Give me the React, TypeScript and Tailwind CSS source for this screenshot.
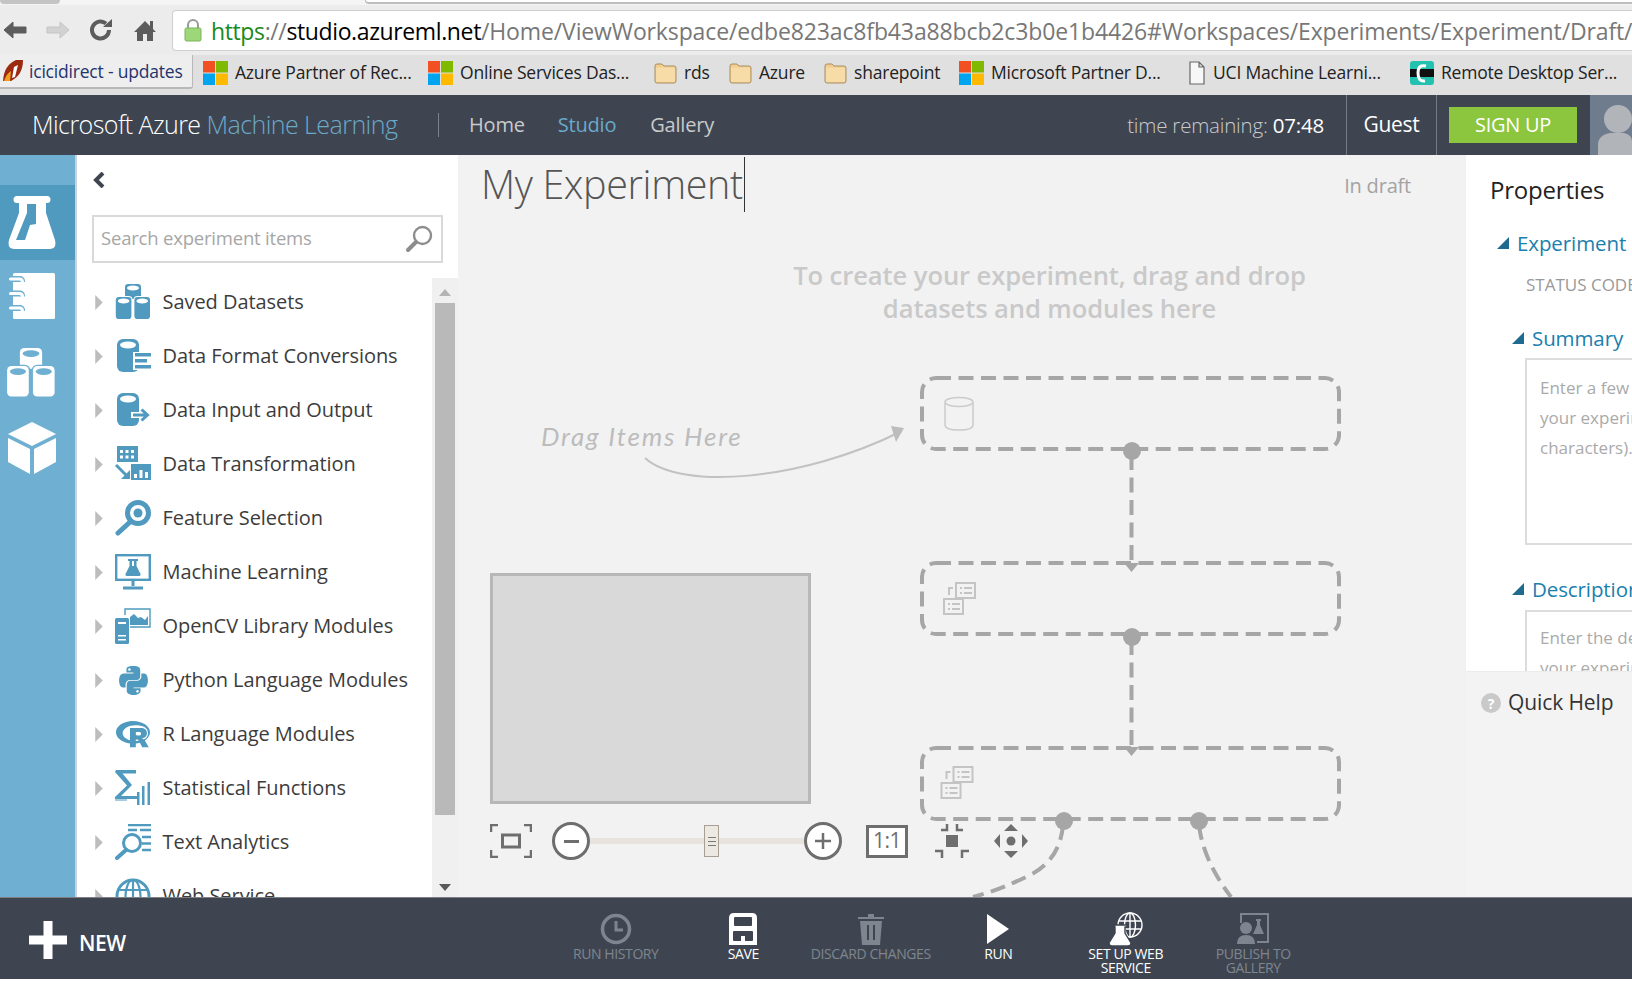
import React from "react";
import { FaPython, FaRProject } from "react-icons/fa";

const C = "#4f9abe";

function Cyl({ cx, top, rx, h, fill, gap }: { cx: number; top: number; rx: number; h: number; fill: string; gap: string }) {
  return (
    <g>
      <rect x={cx - rx} y={top} width={rx * 2} height={h} rx={rx * 0.4} fill={fill} />
      <ellipse cx={cx} cy={top + 4} rx={rx - 2} ry={2.4} fill={gap} />
    </g>
  );
}

function DatasetsSvg({ fill, gap, className }: { fill: string; gap: string; className: string }) {
  return (
    <svg viewBox="0 0 36 36" className={className}>
      <Cyl cx={18} top={0} rx={8} h={15} fill={fill} gap={gap} />
      <rect x={0.5} y={12} width={17} height={24} rx={4} fill={gap} />
      <rect x={18.5} y={12} width={17} height={24} rx={4} fill={gap} />
      <Cyl cx={8.6} top={13} rx={7.8} h={22} fill={fill} gap={gap} />
      <Cyl cx={27.2} top={13} rx={7.8} h={22} fill={fill} gap={gap} />
    </svg>
  );
}

function FormatIcon() {
  return (
    <svg viewBox="0 0 36 36" className="h-[36px] w-[36px]">
      <rect x={2} y={1} width={22} height={33} rx={6} fill={C} />
      <ellipse cx={13} cy={7} rx={8} ry={3.4} fill="#fff" />
      <rect x={18} y={14} width={18} height={18} fill="#fff" />
      <path d="M20 15h16v3.500H20zM20 21h12v3.500H20zM20 27h16v3.500H20z" fill={C} />
    </svg>
  );
}
function InputIcon() {
  return (
    <svg viewBox="0 0 36 36" className="h-[36px] w-[36px]">
      <rect x={2} y={1} width={22} height={33} rx={6} fill={C} />
      <ellipse cx={13} cy={7} rx={8} ry={3.4} fill="#fff" />
      <path d="M16 20h11v-6l9 9-9 9v-6H16z" fill="#fff" />
      <path d="M18 23h14M26.500 17.500l6 5.500-6 5.500" fill="none" stroke={C} strokeWidth={3} />
    </svg>
  );
}
function TransformIcon() {
  return (
    <svg viewBox="0 0 36 36" className="h-[36px] w-[36px]">
      <rect x={2} y={0} width={21} height={16} fill={C} />
      <path d="M5 4h3v3H5zM10.500 4h3v3h-3zM16 4h3v3h-3zM5 9.500h3v3H5zM10.500 9.500h3v3h-3zM16 9.500h3v3h-3z" fill="#fff" />
      <path d="M1 19l11 11" stroke={C} strokeWidth={3} />
      <path d="M6 33h9v-9z" fill={C} />
      <rect x={16} y={18} width={20} height={16} fill={C} />
      <path d="M19 28h3v4h-3zM24.500 24h3v8h-3zM30 26h3v6h-3z" fill="#fff" />
    </svg>
  );
}
function FeatureIcon() {
  return (
    <svg viewBox="0 0 36 36" className="h-[36px] w-[36px]">
      <circle cx={23} cy={13} r={10.500} fill="none" stroke={C} strokeWidth={5} />
      <circle cx={23} cy={13} r={4.500} fill={C} />
      <path d="M15 22L3 33" stroke={C} strokeWidth={5} strokeLinecap="round" />
    </svg>
  );
}
function MlIcon() {
  return (
    <svg viewBox="0 0 36 36" className="h-[36px] w-[36px]">
      <rect x={1.200} y={1.200} width={33.600} height={24.600} fill="none" stroke={C} strokeWidth={2.400} />
      <path d="M13 5h10v2h-1.500v5l4 8q.5 2-2 2H12.500q-2.500 0-2-2l4-8V7H13z" fill={C} />
      <path d="M17 7h2v5h-2z" fill="#fff" />
      <path d="M18 26v6M8 34h20" stroke={C} strokeWidth={3} />
    </svg>
  );
}
function OpenCvIcon() {
  return (
    <svg viewBox="0 0 36 36" className="h-[36px] w-[36px]">
      <path d="M10 7V1h25v18H15" fill="none" stroke={C} strokeWidth={1.400} />
      <path d="M15 17V9l4-3 4 4 3-1 4 3 3-4v9z" fill={C} />
      <rect x={0} y={10} width={14} height={26} rx={1.500} fill={C} />
      <path d="M3 14h8v2H3zM3 27h8v1.500H3zM3 31h8v1.500H3z" fill="#fff" />
    </svg>
  );
}
function SigmaIcon() {
  return (
    <svg viewBox="0 0 36 36" className="h-[36px] w-[36px]">
      <path d="M1 0h20v3.500H7.500L17 15 6 26h16v3H0v-2l12-11.500L0 2z" fill={C} />
      <path d="M22 22h2.500v13H22zM27 16h2.500v19H27zM32.500 12h2.500v23h-2.500z" fill={C} />
      <path d="M0 30h12" stroke={C} strokeWidth={1} />
    </svg>
  );
}
function TextIcon() {
  return (
    <svg viewBox="0 0 36 36" className="h-[36px] w-[36px]">
      <path d="M13 1h23M13 6h9M25 6h11M27 13h9M27 19.500h9M27 26h9" stroke={C} strokeWidth={2.400} />
      <circle cx={17} cy={19} r={8.500} fill="none" stroke={C} strokeWidth={3} />
      <path d="M11 26L2 34" stroke={C} strokeWidth={4} strokeLinecap="round" />
    </svg>
  );
}
function GlobeIcon() {
  return (
    <svg viewBox="0 0 36 36" className="h-[36px] w-[36px]" fill="none" stroke={C} strokeWidth={2.200}>
      <circle cx={18} cy={18} r={16} strokeWidth={3} />
      <ellipse cx={18} cy={18} rx={7.500} ry={16} />
      <path d="M18 2v32M3 12h30M3 24h30" />
    </svg>
  );
}

const modules: { name: string; icon: React.ReactNode }[] = [
  { name: "Saved Datasets", icon: <DatasetsSvg fill={C} gap="#fff" className="h-[36px] w-[36px]" /> },
  { name: "Data Format Conversions", icon: <FormatIcon /> },
  { name: "Data Input and Output", icon: <InputIcon /> },
  { name: "Data Transformation", icon: <TransformIcon /> },
  { name: "Feature Selection", icon: <FeatureIcon /> },
  { name: "Machine Learning", icon: <MlIcon /> },
  { name: "OpenCV Library Modules", icon: <OpenCvIcon /> },
  { name: "Python Language Modules", icon: <FaPython className="h-[33px] w-[33px] text-[#4f9abe]" /> },
  { name: "R Language Modules", icon: <FaRProject className="h-[30px] w-[36px] text-[#4f9abe]" /> },
  { name: "Statistical Functions", icon: <SigmaIcon /> },
  { name: "Text Analytics", icon: <TextIcon /> },
  { name: "Web Service", icon: <GlobeIcon /> },
];

function MsLogo() {
  return (
    <svg viewBox="0 0 25 24" className="h-[24px] w-[25px] shrink-0">
      <rect width={12} height={11.500} fill="#f25022" />
      <rect x={13} width={12} height={11.500} fill="#7fba00" />
      <rect y={12.500} width={12} height={11.500} fill="#00a4ef" />
      <rect x={13} y={12.500} width={12} height={11.500} fill="#ffb900" />
    </svg>
  );
}
function Folder() {
  return (
    <svg viewBox="0 0 23 24" className="h-[24px] w-[23px] shrink-0">
      <path d="M1 5q0-2 2-2h5l2 2h10q2 0 2 2v13q0 2-2 2H3q-2 0-2-2z" fill="#f3cd8e" stroke="#a98f63" strokeWidth={1} />
      <rect x={2} y={6.500} width={19} height={14.500} rx={1} fill="#f8dca8" />
    </svg>
  );
}
function FileIcon() {
  return (
    <svg viewBox="0 0 18 24" className="h-[24px] w-[18px] shrink-0" fill="none" stroke="#666" strokeWidth={1.200}>
      <path d="M2 1h9l5 5v17H2zM11 1v5h5" fill="#f7f7f7" />
    </svg>
  );
}
function RemoteIcon() {
  return (
    <svg viewBox="0 0 24 24" className="h-[24px] w-[24px] shrink-0">
      <rect width={24} height={24} rx={3} fill="#22c1b0" />
      <rect y={8} width={24} height={8} fill="#111" />
      <path d="M16 5q-8-2-8 7t7 8" fill="none" stroke="#fff" strokeWidth={3} />
    </svg>
  );
}

const bookmarks: { label: string; icon: React.ReactNode; cls: string }[] = [
  { label: "Azure Partner of Rec...", icon: <MsLogo />, cls: "w-[225px]" },
  { label: "Online Services Das...", icon: <MsLogo />, cls: "w-[226px]" },
  { label: "rds", icon: <Folder />, cls: "w-[75px]" },
  { label: "Azure", icon: <Folder />, cls: "w-[95px]" },
  { label: "sharepoint", icon: <Folder />, cls: "w-[135px]" },
  { label: "Microsoft Partner D...", icon: <MsLogo />, cls: "w-[229px]" },
  { label: "UCI Machine Learni...", icon: <FileIcon />, cls: "w-[222px]" },
  { label: "Remote Desktop Ser...", icon: <RemoteIcon />, cls: "w-[222px]" },
];

function BrowserChrome() {
  return (
    <div className="flex h-[95px] shrink-0 flex-col bg-[#ececec] font-['Open_Sans',sans-serif]">
      <div className="flex h-[5px] shrink-0 bg-[#f4f4f4]">
        <div className="h-[4px] w-[60px] rounded-b-[4px] bg-[#c4c4c4]" />
        <div className="ml-[305px] h-[4px] flex-1 rounded-bl-[4px] border-b-2 border-l border-[#bdbdbd] bg-white" />
      </div>
      <div className="flex h-[50px] shrink-0 items-center">
        <div className="flex w-[172px] shrink-0 items-center pl-[2px]">
          <svg viewBox="0 0 26 24" className="h-[24px] w-[26px]">
            <path d="M2 12l9-8v5h13v6H11v5z" fill="#5c5c5c" stroke="#5c5c5c" strokeLinejoin="round" />
          </svg>
          <svg viewBox="0 0 26 24" className="ml-[17px] h-[24px] w-[26px]">
            <path d="M24 12l-9-8v5H2v6h13v5z" fill="#d2d2d2" stroke="#c4c4c4" strokeLinejoin="round" />
          </svg>
          <svg viewBox="0 0 24 24" className="ml-[18px] h-[24px] w-[24px]" fill="none" stroke="#5c5c5c" strokeWidth={4}>
            <path d="M20 12a8.500 8.500 0 1 1-3-6.500" />
            <path d="M14 9h9V1z" fill="#5c5c5c" stroke="none" />
          </svg>
          <svg viewBox="0 0 22 24" className="ml-[21px] h-[24px] w-[22px]">
            <path d="M11 3L0 14h3v9h6v-7h4v7h6v-9h3l-3-3V3h-3v5z" fill="#5c5c5c" />
          </svg>
        </div>
        <div className="flex h-[41px] flex-1 items-center overflow-hidden rounded-l-[4px] border border-r-0 border-[#cfcfcf] bg-white pl-[11px]">
          <svg viewBox="0 0 18 24" className="h-[24px] w-[18px] shrink-0">
            <path d="M4 11V7a5 5 0 0 1 10 0v4" fill="none" stroke="#9a9a9a" strokeWidth={2} />
            <rect x={1} y={10} width={16} height={13} rx={1.500} fill="#9ed67a" stroke="#7bb25b" />
          </svg>
          <span className="ml-[9px] mt-[2px] whitespace-nowrap text-[23px] tracking-[-0.13px] text-[#777]">
            <span className="tracking-[-0.38px]">
              <span className="text-[#1a8a1a]">https</span>://
              <span className="text-black">studio.azureml.net</span>
            </span>
            /Home/ViewWorkspace/edbe823ac8fb43a88bcb2c3b0e1b4426#Workspaces/Experiments/Experiment/Draft/
          </span>
        </div>
      </div>
      <div className="flex h-[40px] shrink-0 items-start overflow-hidden whitespace-nowrap bg-[#e0e0e0] text-[17.500px] tracking-[-0.2px] text-[#222]">
        <div className="flex h-[34px] w-[193px] shrink-0 items-center rounded-br-[3px] border-b-2 border-r border-[#b8b8b8] bg-[#eeeeee] pl-[2px] text-[#24346e]">
          <svg viewBox="0 0 22 24" className="h-[24px] w-[22px] shrink-0">
            <path d="M1 22Q2 6 14 1h7Q21 16 9 22z" fill="#9c2a10" />
            <path d="M2 22Q5 14 9 12l-1 10z" fill="#f0a020" />
            <path d="M12 8l4-2-3 12-3 1z" fill="#fff" />
          </svg>
          <span className="ml-[5px]">icicidirect - updates</span>
        </div>
        <div className="flex h-[40px] items-center pb-[5px] pl-[10px]">
          {bookmarks.map((b) => (
            <div key={b.label} className={`flex shrink-0 items-center gap-[7px] ${b.cls}`}>
              {b.icon}
              <span>{b.label}</span>
            </div>
          ))}
        </div>
      </div>
    </div>
  );
}

function TopNav() {
  return (
    <div className="flex h-[60px] shrink-0 items-center bg-[#3e4551] font-['Open_Sans',sans-serif]">
      <div className="w-[438px] shrink-0 whitespace-nowrap pl-[32px] text-[25px] font-light tracking-[-0.56px] text-white">
        Microsoft Azure <span className="text-[#6ba9c9]">Machine Learning</span>
      </div>
      <div className="h-[24px] w-px bg-[#7d838c]" />
      <div className="ml-[30px] flex items-center gap-[33px] text-[20px] tracking-[-0.2px] text-[#c8cacc]">
        <span>Home</span>
        <span className="text-[#6ba9c9]">Studio</span>
        <span className="ml-[1px]">Gallery</span>
      </div>
      <div className="ml-auto flex h-full items-center">
        <div className="mr-[22px] whitespace-nowrap text-[20.500px] font-light tracking-[-0.2px] text-[#c8cacc]">
          time remaining: <span className="font-medium text-white">07:48</span>
        </div>
        <div className="flex h-full w-[91px] items-center justify-center border-x border-[#757b85] text-[21px] tracking-[-0.3px] text-white">
          Guest
        </div>
        <div className="ml-[12px] flex h-[36px] w-[128px] items-center justify-center bg-[#8cc63f] text-[20px] tracking-[-0.3px] text-white">
          SIGN UP
        </div>
        <div className="relative ml-[13px] h-full w-[42px] overflow-hidden bg-[#6f7c8d]">
          <svg viewBox="0 0 42 60" className="h-[60px] w-[42px]">
            <circle cx={28} cy={24} r={14} fill="#b1b5ba" />
            <path d="M8 60V50q0-10 12-12h14q8 2 8 8v14z" fill="#b1b5ba" />
          </svg>
        </div>
      </div>
    </div>
  );
}

function SideRail() {
  return (
    <div className="flex w-[77px] shrink-0 flex-col border-r-2 border-[#c9d3d9] bg-[#6fb0d2]">
      <div className="mt-[30px] flex h-[75px] items-center bg-[#4f9abe] pl-[8px]">
        <svg viewBox="0 0 48 53" className="h-[53px] w-[48px]">
          <path d="M9 0h30a3.500 3.500 0 0 1 0 7h-1v10l9 27q2 9-5 9H6q-7 0-5-9l10-27V7H9a3.500 3.500 0 0 1 0-7z" fill="#fff" />
          <path d="M19 8h9v20l-6 1-5 15H8l11-27z" fill="#4f9abe" />
        </svg>
      </div>
      <div className="mt-[13px] flex h-[46px] pl-[9px]">
        <svg viewBox="0 0 46 46" className="h-[46px] w-[46px]">
          <rect x={4} y={0} width={42} height={46} rx={1.500} fill="#fff" />
          <path d="M0 3h11a5 5 0 0 1 5 5v1H0zM0 17.500h11a5 5 0 0 1 5 5v1H0zM0 32h11a5 5 0 0 1 5 5v1H0z" fill="#6fb0d2" />
          <path d="M1.500 6h9q3 0 3 3M1.500 20.500h9q3 0 3 3M1.500 35h9q3 0 3 3" fill="none" stroke="#fff" strokeWidth={3} strokeLinecap="round" />
        </svg>
      </div>
      <div className="mt-[27px] flex h-[54px] pl-[6px]">
        <DatasetsSvg fill="#fff" gap="#6fb0d2" className="h-[54px] w-[50px]" />
      </div>
      <div className="mt-[22px] flex h-[52px] pl-[8px]">
        <svg viewBox="0 0 48 52" className="h-[52px] w-[48px]">
          <path d="M24 0l24 12-24 12L0 12z" fill="#fff" />
          <path d="M0 16l22 11v25L0 40zM48 16L26 27v25l22-12z" fill="#fff" />
        </svg>
      </div>
    </div>
  );
}

function Palette() {
  return (
    <div className="flex w-[381px] shrink-0 flex-col bg-white font-['Open_Sans',sans-serif]">
      <div className="flex h-[60px] shrink-0 items-center pb-[10px] pl-[16px]">
        <svg viewBox="0 0 12 16" className="h-[16px] w-[12px]">
          <path d="M10 1L3 8l7 7" fill="none" stroke="#3e4551" strokeWidth={4} />
        </svg>
      </div>
      <div className="ml-[15px] flex h-[48px] w-[351px] shrink-0 items-center justify-between border-2 border-[#d9d9d9] pl-[7px] pr-[8px] text-[18.500px] text-[#a6a6a6]">
        <span className="mb-[2px] tracking-[-0.2px]">Search experiment items</span>
        <svg viewBox="0 0 28 28" className="h-[28px] w-[28px]" fill="none" stroke="#8d8d8d">
          <circle cx={17.500} cy={10.500} r={8.500} strokeWidth={2.400} />
          <path d="M11 17L3 25" strokeWidth={4} strokeLinecap="round" />
        </svg>
      </div>
      <div className="mt-[15px] flex min-h-0 flex-1">
        <div className="-mt-[3px] min-w-0 flex-1 overflow-hidden">
          {modules.map((m) => (
            <div key={m.name} className="flex h-[54px] shrink-0 items-center whitespace-nowrap">
              <svg viewBox="0 0 8 16" className="ml-[18px] h-[15px] w-[8px] shrink-0">
                <path d="M0 0l8 8-8 8z" fill="#bdbdbd" />
              </svg>
              <div className="ml-[11px] flex h-[36px] w-[38px] shrink-0 items-center justify-center">{m.icon}</div>
              <span className="ml-[10.500px] text-[20px] tracking-[-0.05px] text-[#3c3c3c]">{m.name}</span>
            </div>
          ))}
        </div>
        <div className="flex w-[26px] shrink-0 flex-col items-center bg-[#f0f0f0]">
          <svg viewBox="0 0 12 7" className="mt-[11px] h-[7px] w-[12px]">
            <path d="M0 7l6-7 6 7z" fill="#b4b4b4" />
          </svg>
          <div className="mt-[7px] h-[512px] w-[20px] bg-[#b9b9b9]" />
          <svg viewBox="0 0 12 7" className="mt-[69px] h-[7px] w-[12px]">
            <path d="M0 0l6 7 6-7z" fill="#5a5a5a" />
          </svg>
        </div>
      </div>
    </div>
  );
}

function DiagramArt() {
  const dash = { fill: "none", stroke: "#a6a6a6", strokeWidth: 4, strokeDasharray: "15 7.500" };
  return (
    <svg viewBox="458 155 1007 742" className="absolute inset-0 h-[742px] w-[1007px]">
      <rect x={922} y={378} width={417} height={71} rx={14} {...dash} />
      <rect x={922} y={563} width={417} height={71} rx={14} {...dash} />
      <rect x={922} y={748} width={417} height={71} rx={14} {...dash} />
      <circle cx={1132} cy={451} r={9} fill="#a6a6a6" />
      <circle cx={1132} cy={637} r={9} fill="#a6a6a6" />
      <circle cx={1064} cy={821} r={9} fill="#a6a6a6" />
      <circle cx={1199} cy={821} r={9} fill="#a6a6a6" />
      <path d="M1131.500 455V562" {...dash} />
      <path d="M1131.500 640V748" {...dash} />
      <path d="M1124 563h15l-7.500 9zM1124 747h15l-7.500 9z" fill="#a6a6a6" />
      <path d="M1063 825Q1060 860 1030 875T973 897" {...dash} />
      <path d="M1199 825Q1203 860 1231 897" {...dash} />
      <path d="M645 458C680 490 800 482 902 431" fill="none" stroke="#c2c2c2" strokeWidth={2} />
      <path d="M891 426L904 428 896 442z" fill="#bdbdbd" />
      <g fill="none" stroke="#cbcbcb" strokeWidth={1.500}>
        <path d="M945 403v22q0 5 14 5t14-5v-22" />
        <ellipse cx={959} cy={402} rx={14} ry={4.500} />
      </g>
      <g fill="none" stroke="#c4c4c4" strokeWidth={2}>
        <rect x={956} y={583} width={19} height={15} />
        <rect x={944} y={599} width={19} height={15} />
        <path d="M960 588h2M964 588h8M960 593h2M964 593h8M948 604h2M952 604h8M948 609h2M952 609h8" />
        <path d="M953 588h-4v7" />
        <rect x={953.500} y={767} width={19} height={15} />
        <rect x={941.500} y={783} width={19} height={15} />
        <path d="M957.500 772h2M961.500 772h8M957.500 777h2M961.500 777h8M945.500 788h2M949.500 788h8M945.500 793h2M949.500 793h8" />
        <path d="M950.500 772h-4v7" />
      </g>
    </svg>
  );
}

function ZoomControls() {
  return (
    <div className="absolute left-[32px] top-[667px] flex h-[38px] items-center">
      <svg viewBox="0 0 42 34" className="h-[34px] w-[42px]" fill="none" stroke="#6e6e6e" strokeWidth={2.500}>
        <path d="M1 8V1h7M34 1h7v7M41 26v7h-7M8 33H1v-7" />
        <rect x={12.500} y={11} width={17} height={12} strokeWidth={3} />
      </svg>
      <div className="ml-[20px] flex h-[38px] w-[38px] items-center justify-center rounded-full border-[3px] border-[#6e6e6e] bg-white">
        <div className="h-[3px] w-[15px] bg-[#6e6e6e]" />
      </div>
      <div className="relative flex h-[6px] w-[214px] items-center bg-[#e8e3dc]">
        <div className="absolute left-[114px] top-[-13px] flex h-[32px] w-[15px] flex-col items-center justify-center gap-[3px] border border-[#a89f94] bg-[#ece8e2]">
          <div className="h-px w-[8px] bg-[#7a7a7a]" />
          <div className="h-px w-[8px] bg-[#7a7a7a]" />
          <div className="h-px w-[8px] bg-[#7a7a7a]" />
        </div>
      </div>
      <div className="flex h-[38px] w-[38px] items-center justify-center rounded-full border-[3px] border-[#6e6e6e] bg-white">
        <svg viewBox="0 0 16 16" className="h-[16px] w-[16px]">
          <path d="M8 0v16M0 8h16" stroke="#6e6e6e" strokeWidth={2.500} />
        </svg>
      </div>
      <div className="ml-[24px] flex h-[33px] w-[42px] items-center justify-center border-[3px] border-[#6e6e6e] bg-white font-['Open_Sans',sans-serif] text-[21px] font-medium tracking-[-0.5px] text-[#6e6e6e]">
        1:1
      </div>
      <svg viewBox="0 0 34 34" className="ml-[27px] h-[34px] w-[34px]" fill="none" stroke="#6e6e6e" strokeWidth={2.500}>
        <path d="M12 0v6H6M22 0v6h6M0 27h7v7M34 27h-7v7" />
        <rect x={11} y={11} width={12} height={12} fill="#6e6e6e" stroke="none" />
      </svg>
      <svg viewBox="0 0 34 34" className="ml-[25px] h-[34px] w-[34px]" fill="#6e6e6e">
        <path d="M17 0l7 7H10zM17 34l-7-7h14zM0 17l6-7v14zM34 17l-6-7v14z" />
        <circle cx={17} cy={17} r={4.500} />
      </svg>
    </div>
  );
}

function Canvas() {
  return (
    <div className="relative flex min-w-0 flex-1 flex-col bg-[#f2f2f2] font-['Open_Sans',sans-serif]">
      <DiagramArt />
      <div className="relative flex h-[58px] shrink-0 items-center pl-[23px] pr-[54px]">
        <span className="border-r border-[#333] pr-px text-[39.500px] font-light leading-[55px] tracking-[-0.37px] text-[#555]">
          My Experiment
        </span>
        <span className="ml-auto mt-[3px] text-[20px] tracking-[-0.2px] text-[#a3a3a3]">In draft</span>
      </div>
      <div className="relative mt-[46px] pl-[176px] text-center text-[25.600px] font-semibold leading-[33px] tracking-[-0.1px] text-[#c9c9c9]">
        To create your experiment, drag and drop
        <br />
        datasets and modules here
      </div>
      <div className="absolute left-[83px] top-[262px] whitespace-nowrap font-['Lato',sans-serif] text-[26px] italic tracking-[1.8px] text-[#bcbcbc]">
        Drag Items Here
      </div>
      <div className="absolute left-[32px] top-[418px] h-[231px] w-[321px] border-[3px] border-[#b7b7b7] bg-[#d9d9d9]" />
      <ZoomControls />
    </div>
  );
}

function Triangle() {
  return (
    <svg viewBox="0 0 12 12" className="h-[12px] w-[12px] shrink-0">
      <path d="M12 0v12H0z" fill="#1f6a8f" />
    </svg>
  );
}

function PropertiesPanel() {
  return (
    <div className="flex w-[167px] shrink-0 flex-col overflow-hidden whitespace-nowrap border-l border-[#f0f0f0] bg-white font-['Open_Sans',sans-serif]">
      <div className="h-[516px] shrink-0 overflow-hidden">
        <div className="pl-[24px] pt-[16px] text-[24px] font-normal leading-[38px] tracking-[-0.2px] text-[#222]">Properties</div>
        <div className="mt-[19px] flex h-[30px] items-center gap-[8px] pl-[31px] text-[20.500px] font-medium tracking-[-0.1px] text-[#1a80ae]">
          <Triangle />
          Experiment
        </div>
        <div className="mt-[15px] pl-[60px] text-[17px] leading-[24px] text-[#999]">STATUS CODE</div>
        <div className="mt-[26px] flex h-[30px] items-center gap-[8px] pl-[46px] text-[20.500px] font-medium tracking-[-0.1px] text-[#1a80ae]">
          <Triangle />
          Summary
        </div>
        <div className="ml-[59px] mt-[5px] h-[187px] w-[200px] border-2 border-[#dcdcdc] pl-[13px] pt-[13px] text-[17px] leading-[30px] text-[#aaa]">
          Enter a few words
          <br />
          your experiment
          <br />
          characters).
        </div>
        <div className="mt-[29px] flex h-[30px] items-center gap-[8px] pl-[46px] text-[20.500px] font-medium tracking-[-0.1px] text-[#1a80ae]">
          <Triangle />
          Description
        </div>
        <div className="ml-[59px] mt-[6px] h-[187px] w-[200px] border-2 border-[#dcdcdc] pl-[13px] pt-[11px] text-[17px] leading-[30px] text-[#aaa]">
          Enter the details
          <br />
          your experiment
        </div>
      </div>
      <div className="flex-1 border-t border-[#ececec] bg-[#f3f3f3] pl-[15px] pt-[16px]">
        <div className="flex h-[30px] items-center gap-[7px] text-[21px] tracking-[-0.1px] text-[#333]">
          <div className="flex h-[20px] w-[20px] items-center justify-center rounded-full bg-[#c9c9c9] text-[14px] font-bold text-white">?</div>
          Quick Help
        </div>
      </div>
    </div>
  );
}

function BottomAction({ label, lit, children }: { label: React.ReactNode; lit?: boolean; children: React.ReactNode }) {
  return (
    <div className={`flex w-[127.500px] shrink-0 flex-col items-center text-center text-[14px] leading-[14px] tracking-[-0.4px] ${lit ? "text-white" : "text-[#7f858e]"}`}>
      <div className="flex h-[37px] w-full items-center justify-center">{children}</div>
      <div>{label}</div>
    </div>
  );
}

function BottomBar() {
  return (
    <div className="flex h-[82px] shrink-0 border-t border-[#7c8085] bg-[#3e4551] font-['Open_Sans',sans-serif]">
      <div className="flex w-[552px] shrink-0 items-center pl-[29px] pt-[3px]">
        <svg viewBox="0 0 38 38" className="h-[38px] w-[38px]">
          <path d="M14.500 0h9v14.500H38v9H23.500V38h-9V23.500H0v-9h14.500z" fill="#fff" />
        </svg>
        <span className="ml-[12px] mt-[8px] text-[21px] font-semibold tracking-[-0.4px] text-white">NEW</span>
      </div>
      <div className="flex pt-[12px]">
        <BottomAction label="RUN HISTORY">
          <svg viewBox="0 0 32 32" className="h-[32px] w-[32px]" fill="none" stroke="#7f858e" strokeWidth={3.500}>
            <circle cx={16} cy={16} r={13.500} />
            <path d="M16 8v9h7" strokeWidth={3} />
          </svg>
        </BottomAction>
        <BottomAction label="SAVE" lit>
          <svg viewBox="0 0 28 32" className="h-[32px] w-[28px]">
            <path d="M5 0h18q5 0 5 5v27H0V5q0-5 5-5z" fill="#fff" />
            <rect x={5} y={4} width={18} height={9} rx={1} fill="#3e4551" />
            <rect x={4} y={18} width={20} height={10} rx={1} fill="#3e4551" />
            <rect x={12} y={23} width={4} height={5} fill="#fff" />
          </svg>
        </BottomAction>
        <BottomAction label="DISCARD CHANGES">
          <svg viewBox="0 0 26 32" className="h-[32px] w-[26px]" fill="#7f858e">
            <path d="M0 4h26v2H0zM10 1h6v3h-6z" />
            <path d="M2 8h22l-2 24H4zM9 12v15h2V12zM15 12v15h2V12z" fillRule="evenodd" />
          </svg>
        </BottomAction>
        <BottomAction label="RUN" lit>
          <svg viewBox="0 0 22 30" className="h-[30px] w-[22px]">
            <path d="M0 0l22 15L0 30z" fill="#fff" />
          </svg>
        </BottomAction>
        <BottomAction label={<>SET UP WEB<br />SERVICE</>} lit>
          <svg viewBox="0 0 36 34" className="h-[34px] w-[36px]" fill="none" stroke="#fff" strokeWidth={1.400}>
            <circle cx={22} cy={13} r={12} />
            <ellipse cx={22} cy={13} rx={5.500} ry={12} />
            <path d="M22 1v24M11 9h22M11 17h22" />
            <path d="M7 13h12v2h-2v6l6 10q0 3-3 3H4q-3 0-3-3l6-10v-6H6z" fill="#fff" stroke="#3e4551" />
          </svg>
        </BottomAction>
        <BottomAction label={<>PUBLISH TO<br />GALLERY</>}>
          <svg viewBox="0 0 32 32" className="h-[32px] w-[32px]" fill="#7f858e">
            <path d="M3 0h29v30H20v-2h10V2H5v8H3z" />
            <path d="M19 6h5v2h-1v4l4 9H16l4-9V8h-1z" />
            <circle cx={9} cy={15} r={6} />
            <path d="M0 31q0-9 9-9t9 9z" />
          </svg>
        </BottomAction>
      </div>
    </div>
  );
}

export default function App() {
  return (
    <div className="flex h-[988px] w-[1632px] flex-col overflow-hidden bg-white">
      <BrowserChrome />
      <TopNav />
      <div className="flex min-h-0 flex-1">
        <SideRail />
        <Palette />
        <Canvas />
        <PropertiesPanel />
      </div>
      <BottomBar />
      <div className="h-[9px] shrink-0 bg-white" />
    </div>
  );
}
